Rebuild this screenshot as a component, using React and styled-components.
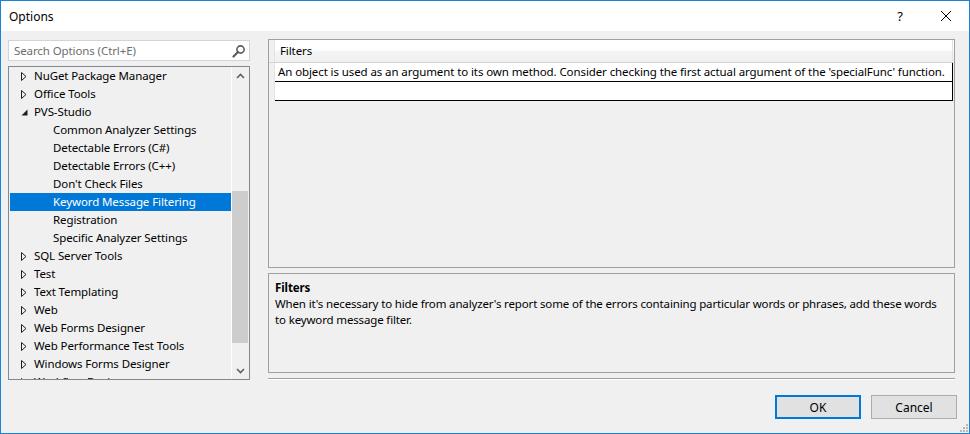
import React from "react";
import styled, { createGlobalStyle } from "styled-components";

const GlobalStyle = createGlobalStyle`
  html, body {
    margin: 0;
    padding: 0;
    background: #ffffff;
  }
  * {
    box-sizing: border-box;
  }
`;

const FONT = `"Segoe UI", "Noto Sans", "DejaVu Sans", sans-serif`;

const treeItems = [
  { label: "NuGet Package Manager", level: 0 },
  { label: "Office Tools", level: 0 },
  { label: "PVS-Studio", level: 0, open: true },
  { label: "Common Analyzer Settings", level: 1 },
  { label: "Detectable Errors (C#)", level: 1 },
  { label: "Detectable Errors (C++)", level: 1 },
  { label: "Don't Check Files", level: 1 },
  { label: "Keyword Message Filtering", level: 1, selected: true },
  { label: "Registration", level: 1 },
  { label: "Specific Analyzer Settings", level: 1 },
  { label: "SQL Server Tools", level: 0 },
  { label: "Test", level: 0 },
  { label: "Text Templating", level: 0 },
  { label: "Web", level: 0 },
  { label: "Web Forms Designer", level: 0 },
  { label: "Web Performance Test Tools", level: 0 },
  { label: "Windows Forms Designer", level: 0 },
  { label: "Workflow Designer", level: 0 },
];

const App = () => {
  return (
    <>
      <GlobalStyle />
      <Window>
        <TitleBar>
          <Title>Options</Title>
          <TitleButtons>
            <TitleButton>?</TitleButton>
            <TitleButton>
              <svg width="12" height="12" viewBox="0 0 12 12">
                <path d="M1 1 L11 11 M11 1 L1 11" stroke="#000" strokeWidth="1" />
              </svg>
            </TitleButton>
          </TitleButtons>
        </TitleBar>

        <Body>
          <Main>
            <LeftColumn>
              <SearchBox>
                <SearchPlaceholder>Search Options (Ctrl+E)</SearchPlaceholder>
                <svg width="14" height="14" viewBox="0 0 14 14">
                  <circle cx="8.5" cy="5.5" r="3.6" fill="none" stroke="#5a5a5a" strokeWidth="1.6" />
                  <path d="M6 8 L1.5 12.5" stroke="#5a5a5a" strokeWidth="2.2" strokeLinecap="round" />
                </svg>
              </SearchBox>

              <Tree>
                <TreeList>
                  {treeItems.map((item) => (
                    <TreeRow key={item.label} $selected={item.selected} $level={item.level}>
                      {item.level === 0 && (
                        <Expander>
                          {item.open ? (
                            <svg width="7" height="7" viewBox="0 0 7 7">
                              <path d="M6.5 0.5 L6.5 6.5 L0.5 6.5 Z" fill="#1e1e1e" />
                            </svg>
                          ) : (
                            <svg width="6" height="9" viewBox="0 0 6 9">
                              <path d="M0.5 0.5 L5 4.5 L0.5 8.5 Z" fill="none" stroke="#1e1e1e" strokeWidth="1" />
                            </svg>
                          )}
                        </Expander>
                      )}
                      {item.label}
                    </TreeRow>
                  ))}
                </TreeList>
                <ScrollBar>
                  <ScrollArrow>
                    <svg width="9" height="6" viewBox="0 0 9 6">
                      <path d="M1 5 L4.5 1.5 L8 5" fill="none" stroke="#606060" strokeWidth="1.6" />
                    </svg>
                  </ScrollArrow>
                  <ScrollTrack>
                    <ScrollThumb />
                  </ScrollTrack>
                  <ScrollArrow>
                    <svg width="9" height="6" viewBox="0 0 9 6">
                      <path d="M1 1 L4.5 4.5 L8 1" fill="none" stroke="#606060" strokeWidth="1.6" />
                    </svg>
                  </ScrollArrow>
                </ScrollBar>
              </Tree>
            </LeftColumn>

            <RightColumn>
              <Grid>
                <GridHeader>
                  <RowHeaderCell />
                  <HeaderCell>Filters</HeaderCell>
                </GridHeader>
                <GridRow>
                  <RowHeaderCell />
                  <Cell>
                    An object is used as an argument to its own method. Consider checking the first actual
                    argument of the 'specialFunc' function.
                  </Cell>
                </GridRow>
                <GridRow>
                  <RowHeaderCell />
                  <Cell />
                </GridRow>
              </Grid>

              <Description>
                <DescTitle>Filters</DescTitle>
                <DescText>
                  When it's necessary to hide from analyzer's report some of the errors containing particular words or phrases, add these words
                  to keyword message filter.
                </DescText>
              </Description>

              <Separator />
            </RightColumn>
          </Main>

          <Footer>
            <Button $default>OK</Button>
            <Button>Cancel</Button>
          </Footer>
          <Grip>
            <svg width="8" height="8" viewBox="0 0 8 8">
              <rect x="6" y="0" width="2" height="2" fill="#b8b8b8" />
              <rect x="3" y="3" width="2" height="2" fill="#b8b8b8" />
              <rect x="6" y="3" width="2" height="2" fill="#b8b8b8" />
              <rect x="0" y="6" width="2" height="2" fill="#b8b8b8" />
              <rect x="3" y="6" width="2" height="2" fill="#b8b8b8" />
              <rect x="6" y="6" width="2" height="2" fill="#b8b8b8" />
            </svg>
          </Grip>
        </Body>
      </Window>
    </>
  );
};

const Window = styled.div`
  width: 970px;
  height: 434px;
  border: 1px solid #1883d7;
  display: flex;
  flex-direction: column;
  font-family: ${FONT};
  font-size: 11.5px;
  letter-spacing: -0.1px;
  color: #000;
  overflow: hidden;
`;

const TitleBar = styled.div`
  height: 30px;
  flex: none;
  background: #fff;
  display: flex;
  align-items: center;
  justify-content: space-between;
  padding-left: 8px;
`;

const Title = styled.div`
  font-size: 12px;
  letter-spacing: 0;
`;

const TitleButtons = styled.div`
  display: flex;
  height: 100%;
`;

const TitleButton = styled.div`
  width: 46px;
  height: 100%;
  display: flex;
  align-items: center;
  justify-content: center;
  font-size: 13px;
`;

const Body = styled.div`
  flex: 1;
  background: #f0f0f0;
  position: relative;
  display: flex;
  flex-direction: column;
  padding: 8px 14px 0 7px;
`;

const Main = styled.div`
  display: flex;
  gap: 18px;
`;

const LeftColumn = styled.div`
  width: 242px;
  display: flex;
  flex-direction: column;
  gap: 5px;
  padding-top: 1px;
`;

const SearchBox = styled.div`
  height: 21px;
  background: #fff;
  border: 1px solid #d3d3de;
  display: flex;
  align-items: center;
  justify-content: space-between;
  padding: 0 3px 0 5px;
`;

const SearchPlaceholder = styled.span`
  color: #6d6d6d;
`;

const Tree = styled.div`
  height: 314px;
  border: 1px solid #828790;
  display: flex;
  overflow: hidden;
`;

const TreeList = styled.div`
  flex: 1;
  padding: 0 0 0 1px;
  overflow: hidden;
`;

const TreeRow = styled.div`
  height: 18px;
  line-height: 18px;
  display: flex;
  align-items: center;
  white-space: nowrap;
  padding-left: ${(p) => (p.$level === 0 ? 9 : 43)}px;
  background: ${(p) => (p.$selected ? "#0078d7" : "transparent")};
  color: ${(p) => (p.$selected ? "#fff" : "#000")};
`;

const Expander = styled.span`
  width: 15px;
  height: 18px;
  display: inline-flex;
  align-items: center;
  justify-content: flex-start;
  padding-left: 2px;
`;

const ScrollBar = styled.div`
  width: 17px;
  border-left: 1px solid #fff;
  display: flex;
  flex-direction: column;
  box-sizing: content-box;
`;

const ScrollArrow = styled.div`
  height: 17px;
  display: flex;
  align-items: center;
  justify-content: center;
`;

const ScrollTrack = styled.div`
  flex: 1;
  padding-top: 107px;
`;

const ScrollThumb = styled.div`
  height: 152px;
  background: #cdcdcd;
  margin-right: 1px;
`;

const RightColumn = styled.div`
  width: 687px;
  display: flex;
  flex-direction: column;
`;

const Grid = styled.div`
  height: 229px;
  border: 1px solid #a0a0a0;
  background: #f0f0f0;
  display: flex;
  flex-direction: column;
`;

const GridHeader = styled.div`
  display: flex;
  height: 23px;
  border-bottom: 1px solid #d5d5d5;
  background: linear-gradient(#ffffff 0%, #ffffff 45%, #f5f5f5 50%, #f0f0f0 100%);
`;

const RowHeaderCell = styled.div`
  width: 6px;
  flex: none;
  border-right: 1px solid #e3e3e3;
  background: #f0f0f0;
`;

const HeaderCell = styled.div`
  flex: 1;
  padding: 3px 0 0 5px;
  margin-right: 1px;
  border-right: 1px solid #e3e3e3;
`;

const GridRow = styled.div`
  display: flex;
  height: 19px;
`;

const Cell = styled.div`
  flex: 1;
  background: #fff;
  border-bottom: 1px solid #000;
  border-right: 1px solid #000;
  line-height: 18px;
  padding-left: 3px;
  white-space: nowrap;
  overflow: hidden;
  margin-right: 1px;
`;

const Description = styled.div`
  margin-top: 5px;
  height: 100px;
  border: 1px solid #a0a0a0;
  padding: 6px 6px;
  line-height: 16px;
`;

const DescTitle = styled.div`
  font-weight: bold;
`;

const DescText = styled.div`
  padding-right: 2px;
  letter-spacing: -0.15px;
`;

const Separator = styled.div`
  margin-top: 5px;
  height: 2px;
  border-top: 1px solid #a0a0a0;
  border-bottom: 1px solid #fff;
`;

const Footer = styled.div`
  display: flex;
  justify-content: flex-end;
  gap: 10px;
  margin-top: 15px;
  margin-right: -2px;
`;

const Button = styled.div`
  width: 86px;
  height: 24px;
  display: flex;
  align-items: center;
  justify-content: center;
  background: #e1e1e1;
  letter-spacing: 0;
  font-size: 12px;
  border: ${(p) => (p.$default ? "2px solid #0078d7" : "1px solid #adadad")};
`;

const Grip = styled.div`
  position: absolute;
  right: 1px;
  bottom: 1px;
  line-height: 0;
`;

export default App;
